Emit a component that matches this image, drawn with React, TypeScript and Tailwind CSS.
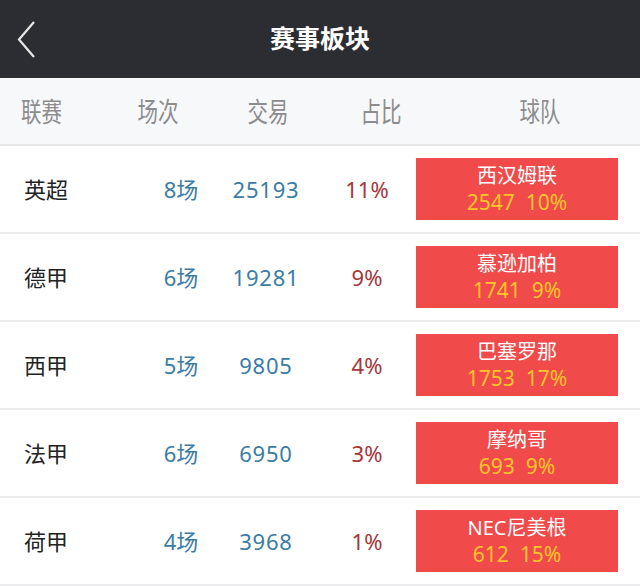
const rows = [
  { league: "英超", games: "8场", trade: "25193", pct: "11%", team: "西汉姆联", tNum: "2547", tPct: "10%" },
  { league: "德甲", games: "6场", trade: "19281", pct: "9%", team: "慕逊加柏", tNum: "1741", tPct: "9%" },
  { league: "西甲", games: "5场", trade: "9805", pct: "4%", team: "巴塞罗那", tNum: "1753", tPct: "17%" },
  { league: "法甲", games: "6场", trade: "6950", pct: "3%", team: "摩纳哥", tNum: "693", tPct: "9%" },
  { league: "荷甲", games: "4场", trade: "3968", pct: "1%", team: "NEC尼美根", tNum: "612", tPct: "15%" },
];

const heads = [
  { label: "联赛", cls: "w-[110px] pl-[21px]" },
  { label: "场次", cls: "w-[96px] text-center" },
  { label: "交易", cls: "w-[124px] text-center" },
  { label: "占比", cls: "w-[102px] text-center" },
  { label: "球队", cls: "flex-1 text-center pl-[8px]" },
];

export default function App() {
  return (
    <div className="w-[640px] h-[586px] overflow-hidden bg-white font-['Noto_Sans','Noto_Sans_CJK_SC',sans-serif]">
      {/* top bar */}
      <div className="h-[78px] bg-[#2c2d32] flex items-center relative">
        <svg className="absolute left-[17px] top-[21px]" width="20" height="37" viewBox="0 0 20 37">
          <path d="M17 1 L2 18.5 L17 36" fill="none" stroke="#e8e8e8" strokeWidth="2.2" />
        </svg>
        <div className="w-full text-center text-white text-[25px] font-bold font-['Noto_Sans_CJK_SC',sans-serif] -mt-[2px]">赛事板块</div>
      </div>

      {/* column header */}
      <div className="h-[68px] bg-[#f7f8fa] border-b-2 border-[#e7e7ea] flex items-center text-[27px] text-[#8c8c8c] font-['Noto_Sans_CJK_SC',sans-serif]">
        {heads.map((h) => (
          <div key={h.label} className={h.cls}>
            <span className={"inline-block scale-x-[0.76] " + (h.label === "联赛" ? "origin-left" : "origin-center")}>{h.label}</span>
          </div>
        ))}
      </div>

      {rows.map((r) => (
        <div key={r.league} className="h-[88px] border-b-2 border-[#ececee] flex items-center text-[22px]">
          <div className="w-[150px] pl-[24px] text-[#222]">{r.league}</div>
          <div className="w-[62px] text-center text-[#3a7ca3]">{r.games}</div>
          <div className="w-[108px] text-center text-[#3a7ca3] tracking-[0.8px]">{r.trade}</div>
          <div className="w-[94px] text-center text-[#a8343a]">{r.pct}</div>
          <div className="w-[202px] h-[62px] ml-[2px] bg-[#f04a4a] flex flex-col items-center justify-center leading-[27px]">
            <div className="text-white text-[20px]">{r.team}</div>
            <div className="text-[#ffc629] text-[21px] whitespace-pre">{r.tNum + "  " + r.tPct}</div>
          </div>
        </div>
      ))}
    </div>
  );
}
